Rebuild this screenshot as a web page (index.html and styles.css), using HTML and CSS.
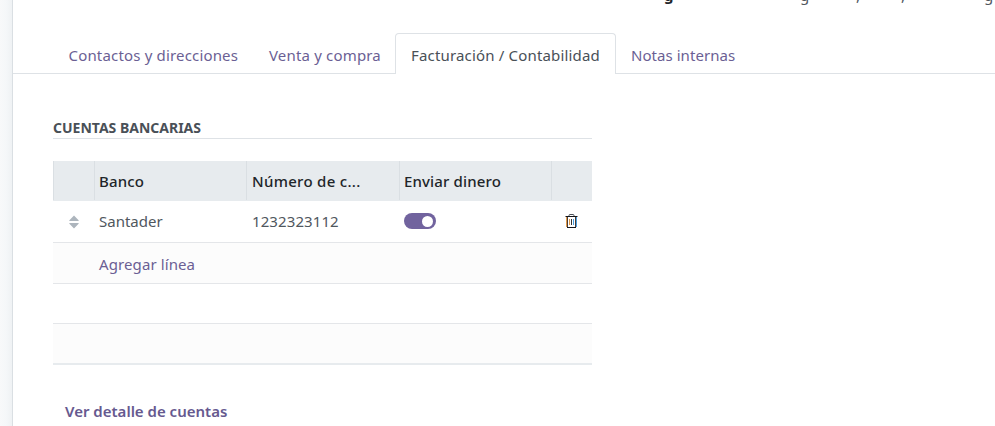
FILE: index.html
```html
<!DOCTYPE html>
<html lang="es">
<head>
<meta charset="utf-8">
<title>Contacto</title>
<link rel="stylesheet" href="styles.css">
</head>
<body>
<main class="sheet">
  <div class="summary"><b class="s1">g</b><span class="s2">g</span><span class="s3">,</span><span class="s4">,</span><span class="s5">g</span></div>
  <nav class="tabs">
    <a class="tab t1"><span>Contactos y direcciones</span></a>
    <a class="tab t2"><span>Venta y compra</span></a>
    <a class="tab t3 active"><span>Facturación / Contabilidad</span></a>
    <a class="tab t4"><span>Notas internas</span></a>
  </nav>
  <section class="content">
    <h2 class="title"><span>Cuentas bancarias</span></h2>
    <div class="table">
      <div class="row head">
        <div class="cell"></div>
        <div class="cell"><span class="h1">Banco</span></div>
        <div class="cell"><span class="h2">Número de c...</span></div>
        <div class="cell"><span class="h3">Enviar dinero</span></div>
        <div class="cell"></div>
      </div>
      <div class="row item">
        <div class="cell handle"><svg width="10" height="14" viewBox="0 0 10 14"><path d="M5 .5 9.600 5.200Q10 6 9.400 6H.6Q0 6 .4 5.200ZM.6 8H9.400Q10 8 9.600 8.800L5 13.500.4 8.800Q0 8 .6 8Z"/></svg></div>
        <div class="cell"><span class="c1">Santader</span></div>
        <div class="cell"><span class="c2">1232323112</span></div>
        <div class="cell"><span class="switch"></span></div>
        <div class="cell trash"><svg width="13" height="14" viewBox="0 0 13 14"><path class="lid" d="M4 2V1.500Q4 .5 5 .5H8Q9 .5 9 1.500V2"/><path class="left" d="M1.500 3V13M4.500 5V11"/><path class="right" d="M11.500 3V13M8.500 5V11"/><path class="can" d="M.5 2.500H12.500M2 13.500H11"/><path class="side" d="M2.500 3V13M10.500 3V13"/><path class="bar" d="M6.500 5V11"/></svg></div>
      </div>
      <div class="row add"><a class="c3">Agregar línea</a></div>
      <div class="row blank"></div>
      <div class="row last"></div>
    </div>
    <a class="more"><span>Ver detalle de cuentas</span></a>
  </section>
</main>
</body>
</html>
```
FILE: styles.css
```css
* { box-sizing: border-box; }
body { margin: 0; height: 426px; overflow: hidden; padding-left: 12px; background: linear-gradient(90deg, #f8f9fa 0, #f5f7f9 6px, #eff2f4 12px); font: 400 15px/24px "Noto Sans", sans-serif; color: #50575e; }
.sheet { height: 426px; border-left: 1px solid #dadfe3; background: #fff; }
.summary { height: 33px; position: relative; overflow: hidden; }
.summary > * { position: absolute; top: -17px; }
.s1 { left: 651px; color: #212529; }
.s2 { left: 787px; }
.s3 { left: 843px; }
.s4 { left: 888px; }
.s5 { left: 971px; }
.tabs { display: flex; height: 41px; padding-left: 40px; border-bottom: 1px solid #dee2e6; }
.tab { height: 41px; padding: 9px 0 0 15px; border: 1px solid transparent; border-bottom: 0; color: #6b5f94; white-space: nowrap; letter-spacing: .17px; }
.t1 { width: 200px; padding-left: 14.5px; }
.t2 { width: 142px; }
.t3 { width: 221px; }
.t4 { padding-left: 14px; letter-spacing: .05px; }
.active { border-color: #dee2e6; border-radius: 4px 4px 0 0; background: #fff; color: #495057; }
.content { padding: 43px 0 0 40px; }
.title { width: 539px; height: 22px; margin: 0; border-bottom: 1px solid #dee2e6; color: #495057; font-size: 14px; line-height: 22px; font-weight: 700; text-transform: uppercase; }
.table { width: 539px; margin-top: 22px; }
.row { border-bottom: 1px solid #e4e6e9; }
.head, .item { display: grid; grid-template-columns: 41px 152px 153px 152px 41px; }
.head { height: 40px; border: 0; background: #e7ebee; color: #212529; font-weight: 500; letter-spacing: .15px; }
.head .cell { height: 39px; padding: 8px 0 0 4px; border-left: 1px solid #dadfe3; white-space: nowrap; }
.h2 { margin-left: 1px; letter-spacing: .3px; }
.item { height: 42px; }
.item .cell { padding: 8px 0 0 5px; }
.item .handle { padding: 14px 0 0 16px; line-height: 0; }
.handle svg { fill: #adb5bd; }
.item .trash { padding: 13px 0 0 14px; line-height: 0; }
.trash svg { fill: none; stroke-width: 1; }
.lid { stroke: #4a5058; }
.can { stroke: #14151a; }
.side { stroke: #4a3d38; }
.left { stroke: #e09a4a; }
.bar { stroke: #333; }
.right { stroke: #4a9fe0; }
.switch { display: block; width: 32px; height: 16px; margin-top: 4px; padding: 3px; border-radius: 8px; background: #71639e; }
.switch::after { content: ""; display: block; width: 11px; height: 11px; margin: -.5px 0 0 15px; border-radius: 50%; background: #fff; }
.add { height: 41px; padding: 9px 0 0 46px; background: #fcfcfc; color: #6b5f94; letter-spacing: .1px; }
.c2 { margin-left: 1px; letter-spacing: .1px; }
.blank { height: 40px; }
.last { height: 41px; border-bottom: 2px solid #e7ebee; background: #fcfcfc; }
.more { display: block; margin: 34px 0 0 12px; color: #66598f; font-weight: 600; }
```
